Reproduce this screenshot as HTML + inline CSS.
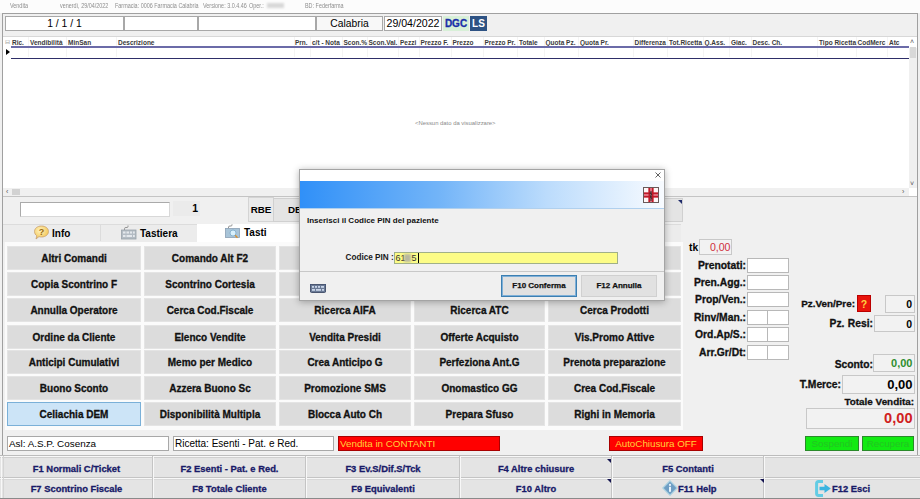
<!DOCTYPE html>
<html><head><meta charset="utf-8">
<style>
*{box-sizing:border-box;margin:0;padding:0}
html,body{width:920px;height:499px;overflow:hidden;background:#f0f0f0;font-family:"Liberation Sans",sans-serif;color:#000}
.btn,.lbl,.fk{-webkit-text-stroke:0.3px currentColor}
.a{position:absolute}
.t{position:absolute;white-space:nowrap}
.b{font-weight:bold}
#title{left:0;top:0;width:920px;height:13px;background:#fcfcfc}
#title span{position:absolute;top:1.5px;font-size:6.4px;line-height:8px;color:#8e8e8e;white-space:nowrap;transform:scaleX(0.85);transform-origin:0 0}
.box{position:absolute;background:#fff;border:1px solid #a8a8a8}
.hdr span{position:absolute;top:38.5px;font-size:6.5px;font-weight:bold;color:#3a3a3a;white-space:nowrap}
.btn{position:absolute;background:#dcdcdc;border:1px solid #e4e4e4;font-weight:bold;font-size:10px;text-align:center;color:#111}
.fk{position:absolute;white-space:nowrap;font-weight:bold;font-size:9.4px;color:#181a68;text-align:center;line-height:14px}
.lbl{position:absolute;font-size:10.3px;font-weight:bold;text-align:right;white-space:nowrap;color:#111}
.ibox{position:absolute;background:#fff;border:1px solid #b8b8b8}
</style></head><body>
<!-- title bar -->
<div id="title" class="a">
<span style="left:10px">Vendita</span>
<span style="left:60px">venerdì, 29/04/2022</span>
<span style="left:115px">Farmacia: 0006 Farmacia Calabria</span>
<span style="left:203px">Versione: 3.0.4.46</span>
<span style="left:249px">Oper.:</span>
<span style="left:267px;top:3px;width:17px;height:5px;background:#d8d8d8;filter:blur(0.8px);transform:none"></span>
<span style="left:305px">BD: Federfarma</span>
</div>
<!-- outer frame -->
<div class="a" style="left:2px;top:13px;width:916px;height:443px;border:1px solid #a0a0a0;border-bottom:none"></div>

<!-- top info boxes -->
<div class="box" style="left:5px;top:16px;width:119px;height:15px"></div>
<div class="t" style="left:5px;top:17px;width:119px;text-align:center;font-size:10.4px;line-height:13px">1 / 1 / 1</div>
<div class="box" style="left:124px;top:16px;width:74px;height:15px"></div>
<div class="box" style="left:198px;top:16px;width:118px;height:15px"></div>
<div class="box" style="left:316px;top:16px;width:67px;height:15px;background:#f8f8f8"></div>
<div class="t" style="left:316px;top:17px;width:67px;text-align:center;font-size:10.3px;line-height:13px">Calabria</div>
<div class="box" style="left:384px;top:16px;width:58px;height:15px"></div>
<div class="t" style="left:385px;top:17px;width:56px;text-align:center;font-size:10.6px;line-height:13px">29/04/2022</div>
<div class="a" style="left:443px;top:16px;width:26px;height:15px;background:#d8f0d8"></div>
<div class="t b" style="left:443px;top:17px;width:26px;text-align:center;font-size:10px;line-height:13px;color:#1a2ea8;-webkit-text-stroke:0.3px currentColor">DGC</div>
<div class="a" style="left:470px;top:16px;width:17px;height:15px;background:#2d5283"></div>
<div class="t b" style="left:470px;top:17px;width:17px;text-align:center;font-size:10px;line-height:13px;color:#fff">LS</div>

<!-- grid -->
<div class="a" style="left:3px;top:36px;width:914px;height:160px;background:#fff;border-top:1px solid #d8d8d8"></div>
<!-- colseps -->
<div class="a" style="left:28px;top:37px;width:1px;height:20px;background:#f4f4f4"></div>
<div class="a" style="left:66px;top:37px;width:1px;height:20px;background:#f4f4f4"></div>
<div class="a" style="left:116px;top:37px;width:1px;height:20px;background:#f4f4f4"></div>
<div class="a" style="left:293.5px;top:37px;width:1px;height:20px;background:#f4f4f4"></div>
<div class="a" style="left:310px;top:37px;width:1px;height:20px;background:#f4f4f4"></div>
<div class="a" style="left:341.5px;top:37px;width:1px;height:20px;background:#f4f4f4"></div>
<div class="a" style="left:366.5px;top:37px;width:1px;height:20px;background:#f4f4f4"></div>
<div class="a" style="left:398px;top:37px;width:1px;height:20px;background:#f4f4f4"></div>
<div class="a" style="left:418.5px;top:37px;width:1px;height:20px;background:#f4f4f4"></div>
<div class="a" style="left:450.5px;top:37px;width:1px;height:20px;background:#f4f4f4"></div>
<div class="a" style="left:482.5px;top:37px;width:1px;height:20px;background:#f4f4f4"></div>
<div class="a" style="left:517px;top:37px;width:1px;height:20px;background:#f4f4f4"></div>
<div class="a" style="left:543.5px;top:37px;width:1px;height:20px;background:#f4f4f4"></div>
<div class="a" style="left:578px;top:37px;width:1px;height:20px;background:#f4f4f4"></div>
<div class="a" style="left:632.5px;top:37px;width:1px;height:20px;background:#f4f4f4"></div>
<div class="a" style="left:667px;top:37px;width:1px;height:20px;background:#f4f4f4"></div>
<div class="a" style="left:702.5px;top:37px;width:1px;height:20px;background:#f4f4f4"></div>
<div class="a" style="left:729px;top:37px;width:1px;height:20px;background:#f4f4f4"></div>
<div class="a" style="left:750.5px;top:37px;width:1px;height:20px;background:#f4f4f4"></div>
<div class="a" style="left:817px;top:37px;width:1px;height:20px;background:#f4f4f4"></div>
<div class="a" style="left:855.5px;top:37px;width:1px;height:20px;background:#f4f4f4"></div>
<div class="a" style="left:887px;top:37px;width:1px;height:20px;background:#f4f4f4"></div>
<div class="hdr">
<span style="left:4.5px;top:38px;font-weight:normal;color:#999;font-size:6px">&#8863;</span>
<span style="left:12px">Ric.</span>
<span style="left:30px">Vendibilità</span>
<span style="left:68px">MinSan</span>
<span style="left:118px">Descrizione</span>
<span style="left:295px">Prn.</span>
<span style="left:312px">c/t - Nota</span>
<span style="left:343.5px">Scon.%</span>
<span style="left:368.5px">Scon.Val.</span>
<span style="left:400px">Pezzi</span>
<span style="left:420.5px">Prezzo F.</span>
<span style="left:452.5px">Prezzo</span>
<span style="left:484.5px">Prezzo Pr.</span>
<span style="left:519px">Totale</span>
<span style="left:545.5px">Quota Pz.</span>
<span style="left:580px">Quota Pr.</span>
<span style="left:634.5px">Differenza</span>
<span style="left:669px">Tot.Ricetta</span>
<span style="left:704.5px">Q.Ass.</span>
<span style="left:731px">Giac.</span>
<span style="left:752.5px">Desc. Ch.</span>
<span style="left:819px">Tipo Ricetta</span>
<span style="left:857.5px">CodMerc</span>
<span style="left:889px">Atc</span>
</div>
<div class="a" style="left:11px;top:46px;width:898px;height:1.7px;background:#6b6ba8"></div>
<div class="a" style="left:11px;top:57.5px;width:898px;height:1.5px;background:#2e2e68"></div>
<div class="a" style="left:6px;top:49px;width:0;height:0;border-left:4px solid #000;border-top:3.5px solid transparent;border-bottom:3.5px solid transparent"></div>
<div class="t" style="left:415px;top:120px;font-size:5.9px;color:#8a8a8a">&lt;Nessun dato da visualizzare&gt;</div>
<!-- scrollbars -->
<div class="a" style="left:3px;top:188px;width:906px;height:8px;background:#f0f0f0"></div>
<div class="a" style="left:909px;top:48px;width:8px;height:140px;background:#f0f0f0"></div>


<!-- grid bottom line -->
<div class="a" style="left:3px;top:196px;width:914px;height:1px;background:#c4c4c4"></div>
<!-- input row -->
<div class="ibox" style="left:20px;top:202px;width:150px;height:15px;border-color:#aaa #d8d8d8 #d8d8d8 #aaa"></div>
<div class="a" style="left:173px;top:201px;width:27px;height:15px;background:#ebebeb"></div>
<div class="t b" style="left:173px;top:202px;width:25px;text-align:right;font-size:10.5px;line-height:13px">1</div>
<div class="a" style="left:248px;top:197px;width:26px;height:25px;background:#eaeaea;border:1px solid #d4d4d4"></div>
<div class="t b" style="left:248px;top:203px;width:26px;text-align:center;font-size:9.8px;line-height:13px">RBE</div>
<div class="a" style="left:273px;top:198px;width:410px;height:24px;background:#e4e4e4;border:1px solid #d0d0d0"></div>
<div class="t b" style="left:288px;top:203px;font-size:9.8px;line-height:13px">DE</div>
<div class="a" style="left:677.5px;top:200px;width:0;height:0;border-top:4.5px solid #1e2a6a;border-left:4.5px solid transparent"></div>
<!-- tabs -->
<div class="a" style="left:3px;top:224px;width:678px;height:18px;background:#ececec;border-top:1px solid #dcdcdc"></div>
<div class="a" style="left:100px;top:225px;width:1px;height:16px;background:#dcdcdc"></div>
<div class="a" style="left:197px;top:224px;width:102px;height:18px;background:#fff"></div>
<div class="t b" style="left:52px;top:227px;font-size:10px;line-height:13px">Info</div>
<div class="t b" style="left:140px;top:227px;font-size:10px;line-height:13px">Tastiera</div>
<div class="t b" style="left:244px;top:226px;font-size:10px;line-height:13px">Tasti</div>
<!-- button panel -->
<div class="a" style="left:5px;top:242px;width:678px;height:188px;background:#fbfbfb"></div>
<div class="btn" style="left:7px;top:246px;width:134px;height:24px;line-height:23px;">Altri Comandi</div>
<div class="btn" style="left:144px;top:246px;width:132px;height:24px;line-height:23px;">Comando Alt F2</div>
<div class="btn" style="left:279px;top:246px;width:132px;height:24px;line-height:23px;"></div>
<div class="btn" style="left:414px;top:246px;width:131px;height:24px;line-height:23px;"></div>
<div class="btn" style="left:548px;top:246px;width:133px;height:24px;line-height:23px;"></div>
<div class="btn" style="left:7px;top:272px;width:134px;height:24px;line-height:23px;">Copia Scontrino F</div>
<div class="btn" style="left:144px;top:272px;width:132px;height:24px;line-height:23px;">Scontrino Cortesia</div>
<div class="btn" style="left:279px;top:272px;width:132px;height:24px;line-height:23px;"></div>
<div class="btn" style="left:414px;top:272px;width:131px;height:24px;line-height:23px;"></div>
<div class="btn" style="left:548px;top:272px;width:133px;height:24px;line-height:23px;"></div>
<div class="btn" style="left:7px;top:298px;width:134px;height:24px;line-height:23px;">Annulla Operatore</div>
<div class="btn" style="left:144px;top:298px;width:132px;height:24px;line-height:23px;">Cerca Cod.Fiscale</div>
<div class="btn" style="left:279px;top:298px;width:132px;height:24px;line-height:23px;">Ricerca AIFA</div>
<div class="btn" style="left:414px;top:298px;width:131px;height:24px;line-height:23px;">Ricerca ATC</div>
<div class="btn" style="left:548px;top:298px;width:133px;height:24px;line-height:23px;">Cerca Prodotti</div>
<div class="btn" style="left:7px;top:325px;width:134px;height:24px;line-height:23px;">Ordine da Cliente</div>
<div class="btn" style="left:144px;top:325px;width:132px;height:24px;line-height:23px;">Elenco Vendite</div>
<div class="btn" style="left:279px;top:325px;width:132px;height:24px;line-height:23px;">Vendita Presidi</div>
<div class="btn" style="left:414px;top:325px;width:131px;height:24px;line-height:23px;">Offerte Acquisto</div>
<div class="btn" style="left:548px;top:325px;width:133px;height:24px;line-height:23px;">Vis.Promo Attive</div>
<div class="btn" style="left:7px;top:350px;width:134px;height:24px;line-height:23px;">Anticipi Cumulativi</div>
<div class="btn" style="left:144px;top:350px;width:132px;height:24px;line-height:23px;">Memo per Medico</div>
<div class="btn" style="left:279px;top:350px;width:132px;height:24px;line-height:23px;">Crea Anticipo G</div>
<div class="btn" style="left:414px;top:350px;width:131px;height:24px;line-height:23px;">Perfeziona Ant.G</div>
<div class="btn" style="left:548px;top:350px;width:133px;height:24px;line-height:23px;">Prenota preparazione</div>
<div class="btn" style="left:7px;top:376px;width:134px;height:24px;line-height:23px;">Buono Sconto</div>
<div class="btn" style="left:144px;top:376px;width:132px;height:24px;line-height:23px;">Azzera Buono Sc</div>
<div class="btn" style="left:279px;top:376px;width:132px;height:24px;line-height:23px;">Promozione SMS</div>
<div class="btn" style="left:414px;top:376px;width:131px;height:24px;line-height:23px;">Onomastico GG</div>
<div class="btn" style="left:548px;top:376px;width:133px;height:24px;line-height:23px;">Crea Cod.Fiscale</div>
<div class="btn" style="left:7px;top:402px;width:134px;height:24px;line-height:23px;background:#cce4f7;border-color:#7ab0d8;">Celiachia DEM</div>
<div class="btn" style="left:144px;top:402px;width:132px;height:24px;line-height:23px;">Disponibilità Multipla</div>
<div class="btn" style="left:279px;top:402px;width:132px;height:24px;line-height:23px;">Blocca Auto Ch</div>
<div class="btn" style="left:414px;top:402px;width:131px;height:24px;line-height:23px;">Prepara Sfuso</div>
<div class="btn" style="left:548px;top:402px;width:133px;height:24px;line-height:23px;">Righi in Memoria</div>


<!-- right panel -->
<div class="t b" style="left:689px;top:241px;font-size:10.3px;line-height:13px">tk</div>
<div class="a" style="left:699px;top:239px;width:33px;height:16px;background:#f2f2f2;border:1px solid #c8c8c8"></div>
<div class="t" style="left:700px;top:241px;width:30.5px;text-align:right;font-size:10.6px;line-height:13px;color:#d03040">0,00</div>
<div class="lbl" style="left:640px;top:259px;width:106px;line-height:13px">Prenotati:</div>
<div class="ibox" style="left:747px;top:258px;width:42px;height:15px"></div>
<div class="lbl" style="left:640px;top:276px;width:106px;line-height:13px">Pren.Agg.:</div>
<div class="ibox" style="left:747px;top:275px;width:42px;height:15px"></div>
<div class="lbl" style="left:640px;top:293px;width:106px;line-height:13px">Prop/Ven.:</div>
<div class="ibox" style="left:747px;top:292px;width:42px;height:15px"></div>
<div class="lbl" style="left:640px;top:310.5px;width:106px;line-height:13px">Rinv/Man.:</div>
<div class="ibox" style="left:747px;top:309.5px;width:21px;height:15px"></div>
<div class="ibox" style="left:767px;top:309.5px;width:22px;height:15px"></div>
<div class="lbl" style="left:640px;top:328px;width:106px;line-height:13px">Ord.Ap/S.:</div>
<div class="ibox" style="left:747px;top:327px;width:21px;height:15px"></div>
<div class="ibox" style="left:767px;top:327px;width:22px;height:15px"></div>
<div class="lbl" style="left:640px;top:345.5px;width:106px;line-height:13px">Arr.Gr/Dt:</div>
<div class="ibox" style="left:747px;top:344.5px;width:21px;height:15px"></div>
<div class="ibox" style="left:767px;top:344.5px;width:22px;height:15px"></div>

<div class="lbl" style="left:780px;top:297px;width:75px;line-height:13px;font-size:9.9px">Pz.Ven/Pre:</div>
<div class="a" style="left:857px;top:295px;width:14px;height:17px;background:#e8140c;border:1px solid #b00"></div>
<div class="t b" style="left:857px;top:297px;width:14px;text-align:center;font-size:10.5px;line-height:14px;color:#ffd040">?</div>
<div class="a" style="left:885px;top:295px;width:30px;height:18px;background:#f2f2f2;border:1px solid #c8c8c8"></div>
<div class="t b" style="left:885px;top:297px;width:27px;text-align:right;font-size:10.5px;line-height:14px">0</div>
<div class="lbl" style="left:800px;top:317px;width:73px;line-height:13px;word-spacing:0.5px">Pz. Resi:</div>
<div class="a" style="left:874px;top:315px;width:41px;height:17px;background:#f2f2f2;border:1px solid #c8c8c8"></div>
<div class="t b" style="left:874px;top:317px;width:38px;text-align:right;font-size:10.5px;line-height:14px">0</div>
<div class="lbl" style="left:800px;top:358px;width:73px;line-height:13px">Sconto:</div>
<div class="a" style="left:873px;top:354px;width:42px;height:18px;background:#f2f2f2;border:1px solid #c8c8c8"></div>
<div class="t b" style="left:873px;top:356px;width:39.5px;text-align:right;font-size:11px;line-height:14px;color:#2e8e2e">0,00</div>
<div class="lbl" style="left:790px;top:378px;width:51px;line-height:13px">T.Merce:</div>
<div class="a" style="left:842px;top:375px;width:73px;height:19px;background:#f2f2f2;border:1px solid #c8c8c8"></div>
<div class="t b" style="left:842px;top:376px;width:70.5px;text-align:right;font-size:13px;line-height:17px">0,00</div>
<div class="lbl" style="left:800px;top:395px;width:114px;line-height:13px;font-size:9.9px">Totale Vendita:</div>
<div class="a" style="left:806px;top:408px;width:109px;height:21px;background:#f2f2f2;border:1px solid #c8c8c8"></div>
<div class="t b" style="left:806px;top:409px;width:106.5px;text-align:right;font-size:14.6px;line-height:18px;color:#d02020">0,00</div>

<!-- status row -->
<div class="ibox" style="left:7px;top:436px;width:162px;height:15px;border-color:#a8a8a8"></div>
<div class="t" style="left:9px;top:437px;font-size:9.9px;line-height:13px">Asl: A.S.P. Cosenza</div>
<div class="ibox" style="left:173px;top:436px;width:161px;height:15px;border-color:#a8a8a8"></div>
<div class="t" style="left:175px;top:437px;font-size:10px;line-height:13px">Ricetta: Esenti - Pat. e Red.</div>
<div class="a" style="left:338px;top:436px;width:162px;height:15px;background:#ff0000;border:1px solid #a80000"></div>
<div class="t" style="left:340px;top:437px;font-size:9.8px;line-height:13px;color:#ffd23a">Vendita in CONTANTI</div>
<div class="a" style="left:609px;top:436px;width:94px;height:15px;background:#ff0000;border:1px solid #a80000"></div>
<div class="t" style="left:609px;top:437px;width:94px;text-align:center;font-size:9.8px;line-height:13px;color:#ffd23a">AutoChiusura OFF</div>
<div class="a" style="left:805px;top:436px;width:54px;height:15px;background:#12ea12;border:1px solid #2a8a2a"></div>
<div class="t" style="left:805px;top:437px;width:54px;text-align:center;font-size:9.8px;line-height:13px;color:#22c422">Sospendi</div>
<div class="a" style="left:862px;top:436px;width:52px;height:15px;background:#12ea12;border:1px solid #2a8a2a"></div>
<div class="t" style="left:862px;top:437px;width:52px;text-align:center;font-size:9.8px;line-height:13px;color:#22c422">Recupera</div>

<!-- function keys -->
<div class="a" style="left:0;top:455px;width:920px;height:44px;background:#e4e4e4"></div>
<div class="a" style="left:0;top:455px;width:920px;height:1px;background:#bcbcbc"></div>
<div class="a" style="left:0;top:456px;width:920px;height:1px;background:#f8f8f8"></div>
<div class="a" style="left:0;top:457px;width:920px;height:1px;background:#cfcfcf"></div>
<div class="a" style="left:0;top:477px;width:920px;height:1px;background:#c4c4c4"></div>
<div class="a" style="left:0;top:478px;width:920px;height:1px;background:#f8f8f8"></div>
<div class="a" style="left:0;top:479px;width:920px;height:1px;background:#d8d8d8"></div>
<div class="a" style="left:0;top:498px;width:920px;height:1px;background:#8a8a8a"></div>
<div class="a" style="left:1px;top:456px;width:1px;height:42px;background:#f8f8f8"></div>
<div class="a" style="left:3px;top:456px;width:1px;height:42px;background:#d4d4d4"></div>
<div class="a" style="left:152px;top:456px;width:1px;height:42px;background:#c4c4c4"></div>
<div class="a" style="left:153px;top:456px;width:1px;height:42px;background:#f8f8f8"></div>
<div class="a" style="left:305px;top:456px;width:1px;height:42px;background:#c4c4c4"></div>
<div class="a" style="left:306px;top:456px;width:1px;height:42px;background:#f8f8f8"></div>
<div class="a" style="left:459px;top:456px;width:1px;height:42px;background:#c4c4c4"></div>
<div class="a" style="left:460px;top:456px;width:1px;height:42px;background:#f8f8f8"></div>
<div class="a" style="left:611px;top:456px;width:1px;height:42px;background:#c4c4c4"></div>
<div class="a" style="left:612px;top:456px;width:1px;height:42px;background:#f8f8f8"></div>
<div class="a" style="left:763px;top:456px;width:1px;height:42px;background:#c4c4c4"></div>
<div class="a" style="left:764px;top:456px;width:1px;height:42px;background:#f8f8f8"></div>
<div class="fk" style="left:0px;top:462px;width:153px">F1 Normali C/Ticket</div>
<div class="fk" style="left:153px;top:462px;width:153px">F2 Esenti - Pat. e Red.</div>
<div class="fk" style="left:306px;top:462px;width:154px">F3 Ev.S/Dif.S/Tck</div>
<div class="fk" style="left:460px;top:462px;width:152px">F4 Altre chiusure</div>
<div class="fk" style="left:612px;top:462px;width:152px">F5 Contanti</div>
<div class="fk" style="left:0px;top:482px;width:153px">F7 Scontrino Fiscale</div>
<div class="fk" style="left:153px;top:482px;width:153px">F8 Totale Cliente</div>
<div class="fk" style="left:306px;top:482px;width:154px">F9 Equivalenti</div>
<div class="fk" style="left:460px;top:482px;width:152px">F10 Altro</div>
<div class="fk" style="left:678px;top:482px;text-align:left">F11 Help</div>
<div class="fk" style="left:832px;top:482px;text-align:left">F12 Esci</div>
<div class="a" style="left:607px;top:459px;width:0;height:0;border-top:4px solid #141450;border-left:4px solid transparent"></div>
<div class="a" style="left:607px;top:479px;width:0;height:0;border-top:4px solid #141450;border-left:4px solid transparent"></div>
<div class="a" style="left:760px;top:479px;width:0;height:0;border-top:4px solid #141450;border-left:4px solid transparent"></div>

<!-- modal -->
<div class="a" style="left:299px;top:169px;width:366px;height:132px;background:#f0f0f0;border:1px solid #a4a4a4;box-shadow:0 1px 7px rgba(0,0,0,0.3)"></div>
<div class="a" style="left:300px;top:170px;width:364px;height:11px;background:#fff"></div>
<svg class="a" style="left:655px;top:172px" width="6" height="6" viewBox="0 0 6 6"><path d="M0.5 0.5 L5.5 5.5 M5.5 0.5 L0.5 5.5" stroke="#505050" stroke-width="0.9"/></svg>
<div class="a" style="left:300px;top:181px;width:364px;height:28px;background:linear-gradient(90deg,#3090f8 0%,#72b4f8 38%,#bcdcfc 68%,#f8fbff 100%);border-bottom:1px solid #b0d0ee"></div>
<svg class="a" style="left:643px;top:187px" width="16" height="16" viewBox="0 0 16 16">
<rect x="0.5" y="0.5" width="15" height="15" fill="#fff6f6" stroke="#6a5a5a" stroke-width="1"/>
<rect x="5.5" y="1" width="5" height="14" fill="#e07080"/><rect x="1" y="5.5" width="14" height="5" fill="#e07080"/>
<rect x="5.5" y="1" width="1.5" height="14" fill="#c01a28"/><rect x="9" y="1" width="1.5" height="14" fill="#c01a28"/>
<rect x="1" y="5.5" width="14" height="1.5" fill="#c01a28"/><rect x="1" y="9" width="14" height="1.5" fill="#c01a28"/>
<path d="M8 4 L8 14 M6.5 6 Q9.5 7 8 8.5 Q6.5 10 9 11.5" stroke="#3a3030" stroke-width="1.1" fill="none"/>
</svg>
<div class="t b" style="left:307px;top:215px;font-size:8px;line-height:11px;color:#111">Inserisci il Codice PIN del paziente</div>
<div class="t b" style="left:345.5px;top:252px;font-size:8.2px;line-height:11px;color:#1a1a1a">Codice PIN :&nbsp;</div>
<div class="a" style="left:394px;top:252px;width:224px;height:12px;background:#fcfc86;border:1px solid #a0b088"></div>
<div class="t" style="left:395.5px;top:252px;font-size:9px;line-height:12px;color:#333">61</div>
<div class="a" style="left:404px;top:254px;width:7px;height:8px;background:#b8b8a0;filter:blur(1px)"></div>
<div class="t" style="left:411.5px;top:252px;font-size:9px;line-height:12px;color:#333">5</div>
<div class="a" style="left:418px;top:253px;width:1px;height:10px;background:#000"></div>
<div class="a" style="left:300px;top:271px;width:364px;height:1px;background:#c8c8c8"></div>
<div class="a" style="left:501px;top:275px;width:76px;height:22px;background:#e1e1e1;border:1px solid #3c7fb1;box-shadow:inset 0 0 0 1px #7fb0d8"></div>
<div class="t b" style="left:501px;top:280px;width:76px;text-align:center;font-size:8px;line-height:12px;color:#111;-webkit-text-stroke:0.25px currentColor">F10 Conferma</div>
<div class="a" style="left:581px;top:275px;width:76px;height:22px;background:#e1e1e1;border:1px solid #d0d0d0"></div>
<div class="t b" style="left:581px;top:280px;width:76px;text-align:center;font-size:8px;line-height:12px;color:#111;-webkit-text-stroke:0.25px currentColor">F12 Annulla</div>
<div class="a" style="left:310px;top:284px;width:16px;height:8px;background:#5a7ab0;border:1px solid #3a5080"></div>


<!-- icons -->
<svg class="a" style="left:33px;top:225px" width="17" height="15" viewBox="0 0 17 15">
<defs><radialGradient id="yg" cx="0.4" cy="0.35" r="0.7"><stop offset="0" stop-color="#fff3c0"/><stop offset="1" stop-color="#f2c24a"/></radialGradient></defs>
<path d="M8.5 1 C12.6 1 15.5 3.4 15.5 6.5 C15.5 9.6 12.6 12 8.5 12 C7.6 12 6.8 11.9 6 11.6 L3 14 L3.8 10.8 C2.4 9.8 1.5 8.3 1.5 6.5 C1.5 3.4 4.4 1 8.5 1 Z" fill="url(#yg)" stroke="#c8a070" stroke-width="0.8"/>
<text x="8.5" y="10" font-family="Liberation Sans" font-weight="bold" font-size="9" text-anchor="middle" fill="#9a6a10">?</text>
</svg>
<svg class="a" style="left:121px;top:225px" width="16" height="15" viewBox="0 0 16 15">
<path d="M3.5 5 L3.5 3.5 Q3.5 2.5 5 2.5 L6 2.5 Q7 2.5 7 1.5 L7 0.5" fill="none" stroke="#8a8a8a" stroke-width="0.9"/>
<rect x="0.5" y="5" width="14.5" height="9" fill="#b4bcc4" stroke="#9aa2aa" stroke-width="0.8"/>
<g fill="#e4e8ec"><rect x="2" y="6.5" width="2.5" height="2"/><rect x="5.5" y="6.5" width="2.5" height="2"/><rect x="9" y="6.5" width="2" height="2"/><rect x="12" y="6.5" width="1.8" height="2"/><rect x="2" y="10" width="2.5" height="2"/><rect x="5.5" y="10" width="5.5" height="2"/><rect x="12" y="10" width="1.8" height="2"/></g>
</svg>
<svg class="a" style="left:225px;top:224px" width="16" height="16" viewBox="0 0 16 16">
<path d="M3.5 4.5 L3.5 3 Q3.5 2 5 2 L6 2 Q7 2 7 1 L7 0.3" fill="none" stroke="#8a8a8a" stroke-width="0.9"/>
<rect x="0.5" y="4.5" width="14" height="9" fill="#a8c4d8" stroke="#8aa0b4" stroke-width="0.8"/>
<circle cx="8" cy="9" r="3" fill="#d8f0fc" stroke="#7aa8c8" stroke-width="0.8"/>
<path d="M10.2 11.2 L12.5 13.8" stroke="#d89030" stroke-width="1.4"/>
</svg>
<!-- modal keyboard icon -->
<svg class="a" style="left:310px;top:284px" width="16" height="9" viewBox="0 0 16 9">
<rect x="0.5" y="0.5" width="15" height="8" rx="1" fill="#6a7a96" stroke="#4a5670" stroke-width="1"/>
<g fill="#c8d4e8"><rect x="2" y="2" width="2" height="1.8"/><rect x="5" y="2" width="2" height="1.8"/><rect x="8" y="2" width="2" height="1.8"/><rect x="11" y="2" width="3" height="1.8"/><rect x="2" y="5" width="3" height="1.8"/><rect x="6" y="5" width="5" height="1.8"/><rect x="12" y="5" width="2" height="1.8"/></g>
</svg>
<!-- F11 help diamond -->
<svg class="a" style="left:662px;top:480px" width="16" height="16" viewBox="0 0 16 16">
<path d="M8 0.8 L15.2 8 L8 15.2 L0.8 8 Z" fill="#6e9ec4" stroke="#a8d0e0" stroke-width="1.2"/>
<circle cx="8" cy="4.9" r="1.1" fill="#e8f4fc"/>
<rect x="7" y="6.8" width="2" height="5" fill="#e8f4fc"/>
</svg>
<!-- F12 exit icon -->
<svg class="a" style="left:815px;top:480px" width="17" height="17" viewBox="0 0 17 17">
<path d="M8 1.6 L3.5 1.6 Q1.6 1.6 1.6 3.5 L1.6 13.5 Q1.6 15.4 3.5 15.4 L8 15.4" fill="none" stroke="#62cce4" stroke-width="3"/>
<path d="M4.5 6.8 L9.5 6.8 L9.5 4 L15.8 8.5 L9.5 13 L9.5 10.2 L4.5 10.2 Z" fill="#3ab4e0"/>
</svg>
<!-- grid scrollbars arrows -->
<div class="t" style="left:6px;top:188px;font-size:7px;line-height:8px;color:#555">&#x2039;</div>
<div class="a" style="left:12px;top:189px;width:8px;height:6px;background:#d2d2d2"></div>
<div class="t" style="left:902px;top:188px;font-size:7px;line-height:8px;color:#555">&#x203A;</div>
<div class="t" style="left:910px;top:38px;font-size:7px;line-height:8px;color:#555">&#x02C4;</div>
<div class="a" style="left:910px;top:47px;width:6px;height:11px;background:#d8d8d8"></div>
<div class="t" style="left:910px;top:180px;font-size:7px;line-height:8px;color:#555">&#x02C5;</div>

</body></html>
